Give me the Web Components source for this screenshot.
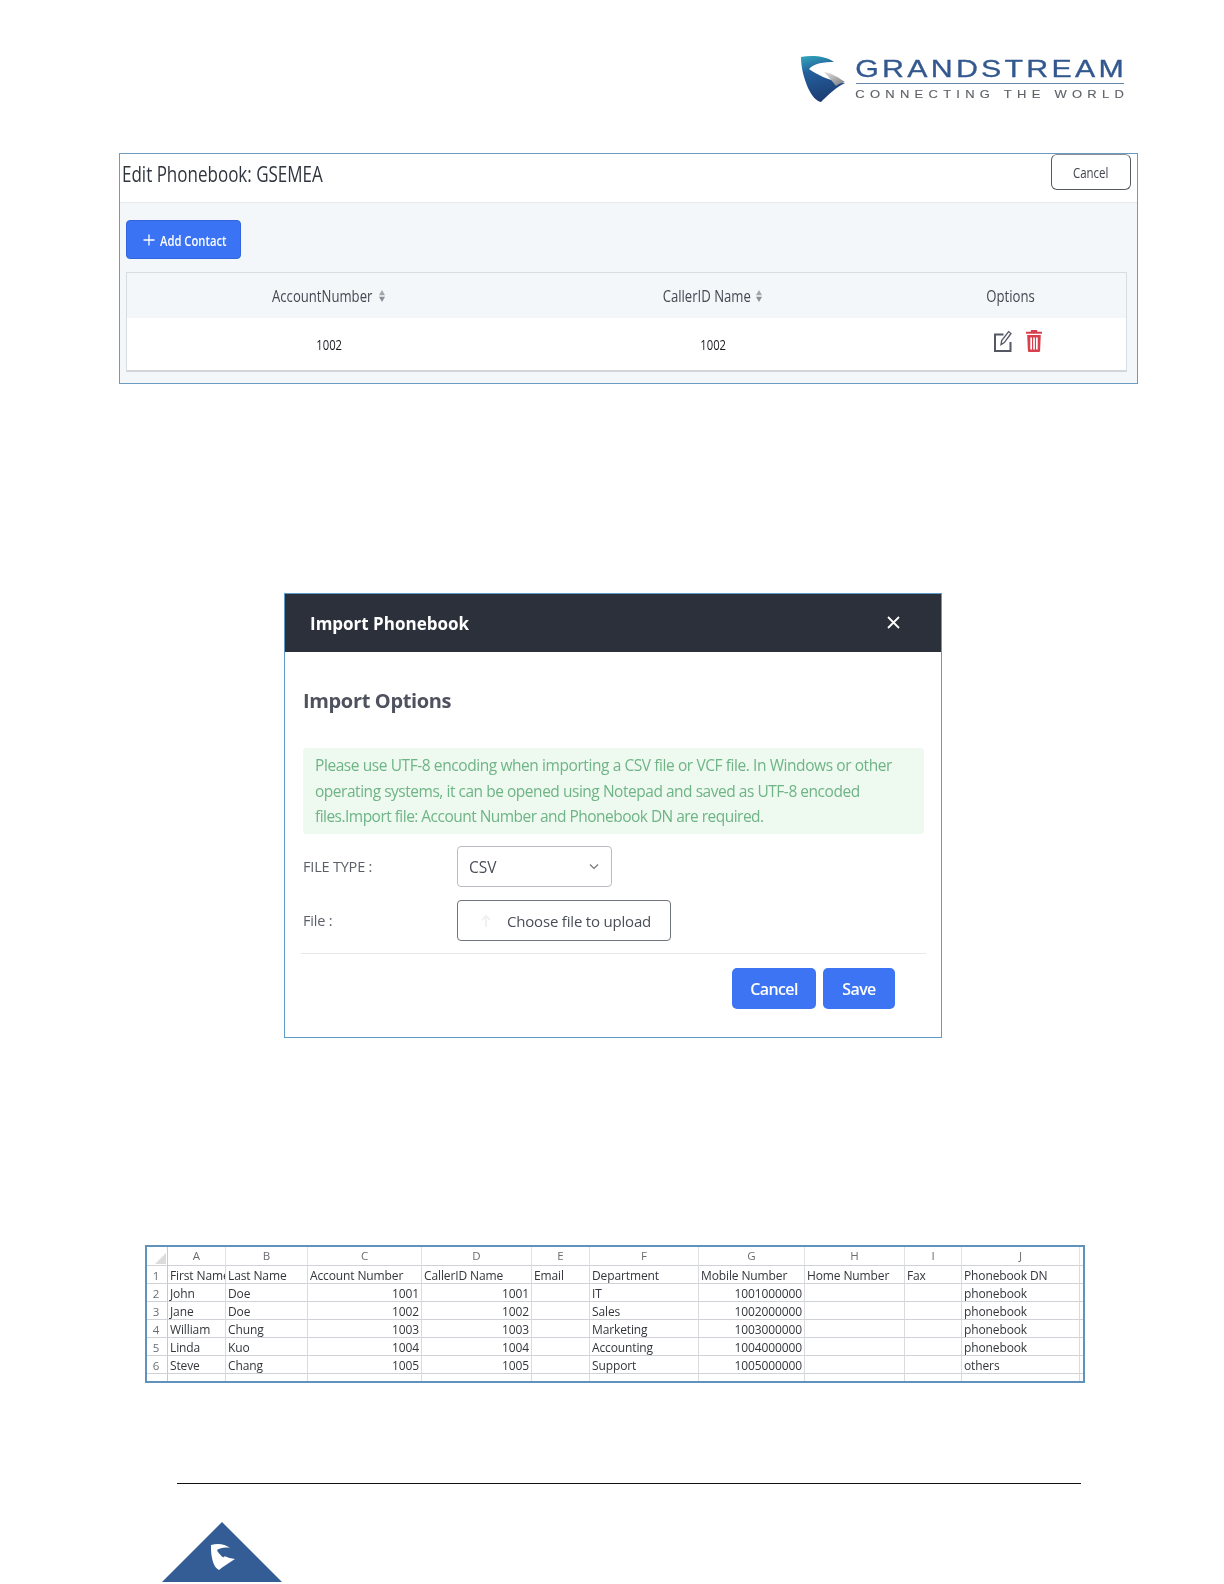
<!DOCTYPE html>
<html lang="en"><head><meta charset="utf-8"><title>Phonebook</title>
<style>
html,body{margin:0;padding:0;background:#fff}
body{width:1224px;height:1584px;overflow:hidden;font-family:"Open Sans","Noto Sans",sans-serif}
</style></head><body>
<gs-page>
  <gs-logo></gs-logo>
  <gs-edit-panel name="GSEMEA"></gs-edit-panel>
  <gs-import-modal></gs-import-modal>
  <gs-sheet></gs-sheet>
  <gs-footer></gs-footer>
</gs-page>
<script>
function def(name, html){
  customElements.define(name, class extends HTMLElement{
    connectedCallback(){
      if(this.shadowRoot) return;
      const r=this.attachShadow({mode:'open'});
      r.innerHTML=typeof html==='function'?html(this):html;
    }
  });
}
def('gs-page',`<style>:host{display:flex;flex-direction:column;width:1224px;height:1584px;overflow:hidden;background:#fff}</style><slot></slot>`);

def('gs-logo',`<style>
:host{display:flex;align-items:flex-start;gap:10px;margin:55px 0 0 800px;height:47px;width:326px;filter:blur(.35px)}
svg{width:46px;height:47px;flex:none}
.t{flex:none;width:268px;display:flex;flex-direction:column}
.n{height:28px;border-bottom:1.5px solid #6484ab}
.n svg,.s svg{display:block;width:268px;overflow:visible}
.n svg{height:28px}.s svg{height:14px}
text{font-family:"Liberation Sans",sans-serif}
</style>
<svg viewBox="6 5 46 47" aria-hidden="true"><defs>
<linearGradient id="g" x1=".2" y1="0" x2=".45" y2="1"><stop offset="0" stop-color="#2f9fb8"/><stop offset=".32" stop-color="#245f9c"/><stop offset="1" stop-color="#1c3c72"/></linearGradient>
<linearGradient id="h" x1="0" y1="0" x2="1" y2="1"><stop offset="0" stop-color="#e4e4e4"/><stop offset="1" stop-color="#77777c"/></linearGradient></defs>
<path fill="url(#g)" d="M7 7C18 5 32 6 40 12 30 12 20 13 15 19 22 24 35 31 51 33 42 37 34 45 27 52 22 51 18 46 14 38 10 28 7 18 7 7Z"/>
<path fill="url(#h)" d="M30 22C38 23 45 28 51 32 47 33 44 34 42 36 38 31 34 26 30 22Z"/></svg>
<div class="t"><div class="n"><svg viewBox="0 0 268 28"><text transform="scale(1.32 1)" x="-.6" y="22.5" font-size="23" textLength="203.500" lengthAdjust="spacing" fill="#33588f" stroke="#33588f" stroke-width=".3">GRANDSTREAM</text></svg></div>
<div class="s"><svg viewBox="0 0 268 14"><text transform="scale(1.3 1)" x="-.5" y="14" font-size="10" textLength="206.500" lengthAdjust="spacing" fill="#5d6168" stroke="#5d6168" stroke-width=".1">CONNECTING THE WORLD</text></svg></div></div>`);

def('gs-sort',`<style>:host{display:inline-block;width:8px;height:14px;line-height:0}svg{width:8px;height:14px;display:block}</style>
<svg viewBox="0 0 8 14"><path fill="#a3a6ab" d="M4 1 7 6.300H1Z"/><path fill="#8b8e94" d="M4 13 1 7.700h6Z"/></svg>`);

def('gs-edit-panel',el=>`<style>
:host{display:block;box-sizing:border-box;margin:51px 0 0 119px;width:1019px;height:231px;border:1px solid #6d9bbf;background:#f3f7fa;color:#3b3f4a;font-family:"Open Sans","Noto Sans",sans-serif}
.top{height:48px;background:#fff;border-bottom:1px solid #e8ebee;display:flex;justify-content:space-between;align-items:flex-start;padding-right:6px}
h1{margin:6px 0 0 2px;font-size:22px;line-height:26px;font-weight:400;color:#30343c;transform:scaleX(.773);transform-origin:0 50%;white-space:nowrap}
.cancel{box-sizing:border-box;width:80px;height:36px;padding-top:1px;border:1px solid #555a62;border-top-color:#8b8f95;border-radius:6px;background:#fff;display:flex;align-items:center;justify-content:center;font-size:14px;color:#3f434b}
.cancel span,.c span{display:inline-block;transform:scaleX(.82);white-space:nowrap}
.body{padding:17px 10px 0 6px}
.add{box-sizing:border-box;width:115px;height:39px;border-radius:4px;background:#3b73f5;border:1px solid #3265dd;color:#fff;display:flex;align-items:center;padding-left:16px;font-size:15px;font-weight:600}
.add svg{width:12px;height:12px;flex:none}
.add span{display:inline-block;margin-left:5px;transform:scaleX(.75);transform-origin:0 50%;white-space:nowrap}
.tbl{box-sizing:border-box;margin-top:13px;height:100px;border:1px solid #d8dde2;border-bottom:2px solid #d2d6da;display:grid;grid-template-columns:404px 364px 1fr;grid-template-rows:45px 1fr}
.c{display:flex;align-items:center;justify-content:center;font-size:16px;color:#444852}
.h{background:#f3f7fa}
.r{background:#fff;color:#1b1d22;font-size:15px}
.r span{transform:scaleX(.75)}
.a span{margin:0 -11px}
.b span{margin:0 -10px}
gs-sort{margin-left:5px}
.ops{gap:14px;padding:0 0 7px 14px}
.ops svg{display:block;flex:none}
</style>
<div class="top"><h1>Edit Phonebook: ${el.getAttribute('name')}</h1><div class="cancel"><span>Cancel</span></div></div>
<div class="body">
<div class="add"><svg viewBox="0 0 12 12"><path d="M6 .5v11M.5 6h11" stroke="#fff" stroke-width="1.300"/></svg><span>Add Contact</span></div>
<div class="tbl">
<div class="c h a"><span>AccountNumber</span><gs-sort></gs-sort></div>
<div class="c h b"><span>CallerID Name</span><gs-sort></gs-sort></div>
<div class="c h"><span>Options</span></div>
<div class="c r"><span>1002</span></div>
<div class="c r"><span>1002</span></div>
<div class="c r ops">
<svg width="18" height="22" viewBox="0 0 18 22" fill="none" stroke="#555864" stroke-width="2"><path d="M9.500 4.500H1v16.500h15.500v-9"/><path d="M7 14.600 7.700 10.600 14.600 1.600 17 3.500 10.300 12.600Z" stroke-width="1.300"/></svg>
<svg width="16" height="22" viewBox="0 0 16 22"><path fill="#d9404f" fill-rule="evenodd" d="M5.200 0h5.600l.7 1.800H16v2H0v-2h4.500ZM1.200 5h13.600l-.7 15.400c0 .9-.7 1.600-1.600 1.600H3.500c-.9 0-1.600-.7-1.600-1.600ZM4.300 7.500v12H6v-12ZM7.200 7.500v12h1.700v-12ZM10 7.500v12h1.700v-12Z"/></svg>
</div>
</div></div>`);

def('gs-import-modal',`<style>
:host{display:block;box-sizing:border-box;margin:209px 0 0 284px;width:658px;height:445px;border:1px solid #5d9bcb;background:#fff;font-family:"Open Sans","Noto Sans",sans-serif;filter:blur(.3px)}
.hd{height:58px;background:#2b303b;color:#fff;display:flex;align-items:center;justify-content:space-between;padding:0 41px 0 25px;box-sizing:border-box;font-size:17px;font-weight:700}
.hd svg{width:13px;height:13px;margin-bottom:2px}
.bd{padding:0 17px 0 18px}
h2{margin:36px 0 0;font-size:20px;line-height:26px;font-weight:700;color:#4e525e;letter-spacing:-.35px}
.alert{box-sizing:border-box;margin-top:34px;height:86px;background:#eefaef;border-radius:3px;padding:5px 12px;color:#6fb487;font-size:15.500px;line-height:25.500px;letter-spacing:-.42px;white-space:nowrap}
.alert span{display:block}
.row{display:flex;align-items:center}
.lb{width:154px;font-size:14.500px;color:#5b5f68;letter-spacing:-.2px}
.sel,.file{box-sizing:border-box;height:41px;border-radius:4px;background:#fff;display:flex;align-items:center;color:#4a4e58}
.sel{margin-top:12px;width:155px;border:1px solid #b9bcc2;padding:0 12px 0 11px;justify-content:space-between;font-size:15.500px}
.sel svg{width:10px;height:7px}
.r2{margin-top:13px}
.file{width:214px;border:1px solid #70747b;padding-left:21px;font-size:15px;letter-spacing:-.19px}
.file svg{width:14px;height:16px;margin-right:14px;flex:none}
.hr{height:1px;background:#e7e8ea;margin:12px -2px 0 -2px}
.ft{display:flex;justify-content:flex-end;gap:7px;padding:14px 29px 0 0}
.b{box-sizing:border-box;height:41px;border-radius:5px;background:#3c74f4;color:#fff;font-size:16px;font-weight:600;letter-spacing:-.6px;display:flex;align-items:center;justify-content:center}
.b.a{width:84px}.b.s{width:72px}
</style>
<div class="hd"><span>Import Phonebook</span><svg viewBox="0 0 13 13"><path d="M1 1 12 12M12 1 1 12" stroke="#fff" stroke-width="1.800"/></svg></div>
<div class="bd">
<h2>Import Options</h2>
<div class="alert"><span>Please use UTF-8 encoding when importing a CSV file or VCF file. In Windows or other</span><span style="letter-spacing:-.47px">operating systems, it can be opened using Notepad and saved as UTF-8 encoded</span><span style="letter-spacing:-.53px">files.Import file: Account Number and Phonebook DN are required.</span></div>
<div class="row"><div class="lb" style="margin-top:12px">FILE TYPE :</div><div class="sel"><span>CSV</span><svg viewBox="0 0 10 7" fill="none"><path d="M1 1.500 5 5.500 9 1.500" stroke="#777" stroke-width="1.200"/></svg></div></div>
<div class="row r2"><div class="lb">File :</div><div class="file"><svg viewBox="0 0 14 16" fill="none"><path d="M7 14V3M3 7l4-4 4 4" stroke="#f1f1f1" stroke-width="2"/></svg>Choose file to upload</div></div>
<div class="hr"></div>
<div class="ft"><div class="b a">Cancel</div><div class="b s">Save</div></div>
</div>`);

def('gs-sheet',()=>{
  const cols=['A','B','C','D','E','F','G','H','I','J'];
  const rows=[
   ['First Name','Last Name','Account Number','CallerID Name','Email','Department','Mobile Number','Home Number','Fax','Phonebook DN'],
   ['John','Doe','1001','1001','','IT','1001000000','','','phonebook'],
   ['Jane','Doe','1002','1002','','Sales','1002000000','','','phonebook'],
   ['William','Chung','1003','1003','','Marketing','1003000000','','','phonebook'],
   ['Linda','Kuo','1004','1004','','Accounting','1004000000','','','phonebook'],
   ['Steve','Chang','1005','1005','','Support','1005000000','','','others']];
  let h='<div class="c0 corner"><i></i></div>'+cols.map(c=>`<div class="ch">${c}</div>`).join('')+'<div class="e ch"></div>';
  rows.forEach((r,i)=>{
    h+=`<div class="c0">${i+1}</div>`;
    r.forEach((v,j)=>{const num=i>0&&[2,3,6].includes(j);h+=`<div class="d${num?' n':''}"><span>${v}</span></div>`});
    h+='<div class="e"></div>';
  });
  h+='<div class="c0 last"><b></b></div>'+cols.map(()=>'<div class="d last"></div>').join('')+'<div class="e last"></div>';
  return `<style>
:host{display:block;box-sizing:border-box;margin:207px 0 0 145px;width:940px;height:138px;border:2px solid #5f93bd;background:#fff;overflow:hidden;font-family:"Open Sans","Noto Sans",sans-serif;filter:blur(.25px)}
.g{display:grid;grid-template-columns:21px 58px 82px 114px 110px 58px 109px 106px 100px 57px 118px 1fr;grid-template-rows:19px repeat(6,18px) 9px}
.g>div{box-sizing:border-box;border-bottom:1px solid #cfd3d8;border-right:1px solid #d9dbde;font-size:12px;line-height:19px;color:#33363b;white-space:nowrap;overflow:hidden}
.ch{text-align:center;color:#6a6d72!important;font-size:11.500px!important;border-right-color:#e2e3e5!important;line-height:18px!important}
.c0{text-align:center;color:#6a6d72!important;font-size:11.500px!important;border-right-color:#c6c9cd!important;padding-right:2px}
.corner i{display:block;width:0;height:0;border-style:solid;border-width:0 0 11px 11px;border-color:transparent transparent #dcdcdc transparent;margin:6px 0 0 8px}
.c0 b{display:block;width:5px;height:1px;background:#8a8d92;margin:7px 0 0 5px}
.d{padding:0 2px;letter-spacing:-.01em}.d.n{text-align:right}
.e{border-right:0!important}
.last{border-bottom:0!important}
</style><div class="g">${h}</div>`;
});

def('gs-footer',`<style>
:host{display:block;margin:100px 0 0 0}
.l{height:1px;background:#111;margin-left:177px;width:904px}
svg{display:block;width:120px;height:60px;margin:38px 0 0 162px}
</style><div class="l"></div>
<svg viewBox="0 0 120 60"><path fill="#345c95" d="M60 0 120 60H0Z"/><g transform="translate(38 12)">
<path fill="#fff" d="M11 11C18 9 25 10 30 14 25 13 20 14 17 16 21 21 27 24 35 25 30 28 24 32 19 36 15 34 13 29 12 24 11 20 11 15 11 11Z"/>
<path fill="#345c95" d="M17 16.500C21 16.500 26 18 29 22.500 26 21.500 24 22 23.500 23.500 21 22 19 19.500 17 16.500Z"/></g></svg>`);
</script>
</body></html>
